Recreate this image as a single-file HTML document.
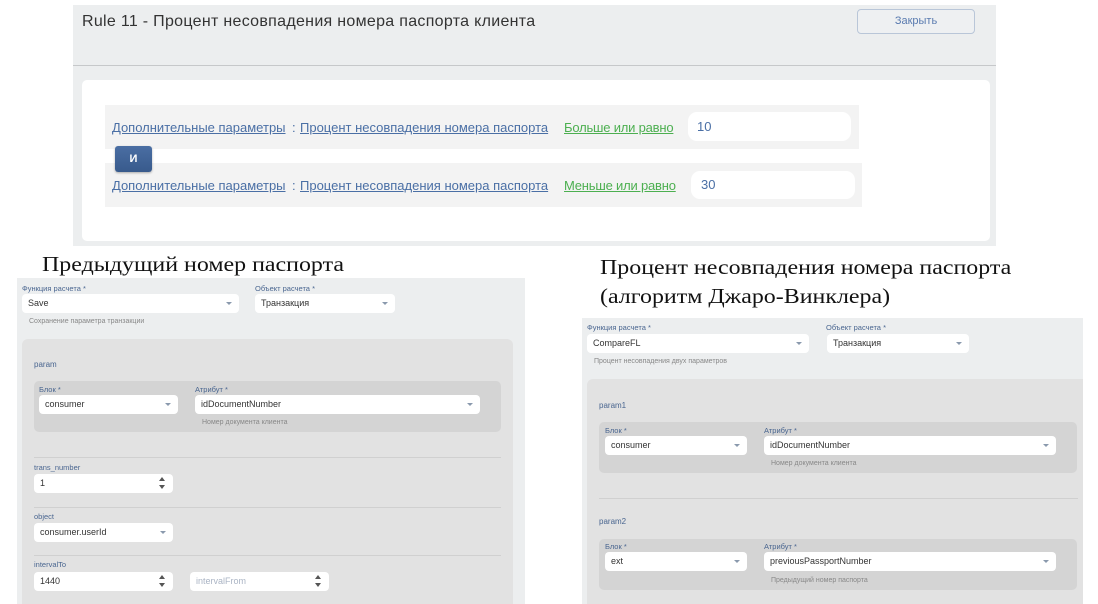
<!DOCTYPE html>
<html><head><meta charset="utf-8">
<style>
*{margin:0;padding:0;box-sizing:border-box}
body{width:1098px;height:604px;background:#fff;position:relative;overflow:hidden;font-family:"Liberation Sans","Noto Sans CJK SC",sans-serif}
.a{position:absolute;white-space:nowrap}
.lk{color:#4a6fa5;text-decoration:underline;font-size:13px}
.gr{color:#4caf50;text-decoration:underline;font-size:13px}
.sel{position:absolute;background:#fff;border-radius:4px;font-size:9px;color:#333;padding-left:6px;line-height:19px;height:19px}
.sel:after{content:"";position:absolute;right:7px;top:8px;border-left:3px solid transparent;border-right:3px solid transparent;border-top:3px solid #8a99ad}
.sp:after{content:"";position:absolute;right:8px;top:3px;width:0;height:0;border-left:3px solid transparent;border-right:3px solid transparent;border-bottom:4px solid #555;border-top:0}
.sp:before{content:"";position:absolute;right:8px;top:11px;width:0;height:0;border-left:3px solid transparent;border-right:3px solid transparent;border-top:4px solid #555}
.lb{position:absolute;font-size:7.5px;color:#4a6690;white-space:nowrap}
.ht{position:absolute;font-size:7px;color:#888;white-space:nowrap}
.cap{position:absolute;font-family:"Liberation Serif",serif;font-size:21px;color:#111;white-space:nowrap;transform-origin:0 0;transform:scaleX(1.14)}
</style></head><body>
<!-- top panel -->
<div class="a" style="left:73px;top:5px;width:923px;height:241px;background:#eceeef"></div>
<div class="a" style="left:73px;top:65px;width:923px;height:1px;background:#c6c8ca"></div>
<div class="a" style="left:82px;top:13px;font-size:16px;color:#333;letter-spacing:0.3px">Rule 11 - Процент несовпадения номера паспорта клиента</div>
<div class="a" style="left:857px;top:9px;width:118px;height:25px;border:1px solid #b9c6d8;border-radius:4px;background:#eef0f2;color:#5a7bb0;font-size:11px;text-align:center;line-height:23px">Закрыть</div>
<div class="a" style="left:82px;top:80px;width:908px;height:161px;background:#fff;border-radius:5px"></div>
<div class="a" style="left:105px;top:105px;width:754px;height:44px;background:#f3f3f3"></div>
<div class="a" style="left:105px;top:163px;width:757px;height:44px;background:#f3f3f3"></div>
<div class="a" style="left:688px;top:112px;width:163px;height:29px;background:#fff;border-radius:9px"></div>
<div class="a" style="left:691px;top:171px;width:164px;height:28px;background:#fff;border-radius:9px"></div>
<div class="a lk" style="left:112px;top:120px">Дополнительные параметры</div>
<div class="a lk" style="left:292px;top:120px;text-decoration:none">:</div>
<div class="a lk" style="left:300px;top:120px">Процент несовпадения номера паспорта</div>
<div class="a gr" style="left:564px;top:120px;letter-spacing:-0.2px">Больше или равно</div>
<div class="a" style="left:697px;top:119px;font-size:13px;color:#4a6fa5">10</div>
<div class="a lk" style="left:112px;top:178px">Дополнительные параметры</div>
<div class="a lk" style="left:292px;top:178px;text-decoration:none">:</div>
<div class="a lk" style="left:300px;top:178px">Процент несовпадения номера паспорта</div>
<div class="a gr" style="left:564px;top:178px;letter-spacing:-0.2px">Меньше или равно</div>
<div class="a" style="left:701px;top:177px;font-size:13px;color:#4a6fa5">30</div>
<div class="a" style="left:115px;top:146px;width:37px;height:26px;background:linear-gradient(#4a6ea3,#385a8c);border-radius:3px;color:#fff;font-size:11px;font-weight:bold;text-align:center;line-height:26px;box-shadow:0 1px 2px rgba(0,0,0,.3)">И</div>

<!-- captions -->
<div class="cap" style="left:42px;top:252px">Предыдущий номер паспорта</div>
<div class="cap" style="left:600px;top:255px">Процент несовпадения номера паспорта</div>
<div class="cap" style="left:600px;top:284px">(алгоритм Джаро-Винклера)</div>

<!-- left screenshot -->
<div class="a" style="left:17px;top:278px;width:508px;height:326px;background:#eceeef"></div>
<div class="lb" style="left:22px;top:284px">Функция расчета *</div>
<div class="lb" style="left:255px;top:284px">Объект расчета *</div>
<div class="sel" style="left:22px;top:294px;width:217px">Save</div>
<div class="sel" style="left:255px;top:294px;width:140px">Транзакция</div>
<div class="ht" style="left:29px;top:318px">Сохранение параметра транзакции</div>
<div class="a" style="left:22px;top:339px;width:491px;height:265px;background:#e2e2e2;border-radius:6px 6px 0 0"></div>
<div class="lb" style="left:34px;top:360px;font-size:8px">param</div>
<div class="a" style="left:34px;top:381px;width:467px;height:51px;background:#d4d4d4;border-radius:5px"></div>
<div class="lb" style="left:39px;top:385px">Блок *</div>
<div class="lb" style="left:195px;top:385px">Атрибут *</div>
<div class="sel" style="left:39px;top:395px;width:139px">consumer</div>
<div class="sel" style="left:195px;top:395px;width:285px">idDocumentNumber</div>
<div class="ht" style="left:202px;top:419px">Номер документа клиента</div>
<div class="a" style="left:34px;top:457px;width:467px;height:1px;background:#d0d0d0"></div>
<div class="lb" style="left:34px;top:463px">trans_number</div>
<div class="sel sp" style="left:34px;top:474px;width:139px">1</div>
<div class="a" style="left:34px;top:507px;width:467px;height:1px;background:#d0d0d0"></div>
<div class="lb" style="left:34px;top:512px">object</div>
<div class="sel" style="left:34px;top:523px;width:139px">consumer.userId</div>
<div class="a" style="left:34px;top:555px;width:467px;height:1px;background:#d0d0d0"></div>
<div class="lb" style="left:34px;top:560px">intervalTo</div>
<div class="sel sp" style="left:34px;top:572px;width:139px">1440</div>
<div class="sel sp" style="left:190px;top:572px;width:139px;color:#aab4c4">intervalFrom</div>

<!-- right screenshot -->
<div class="a" style="left:582px;top:318px;width:501px;height:286px;background:#eceeef"></div>
<div class="lb" style="left:587px;top:323px">Функция расчета *</div>
<div class="lb" style="left:826px;top:323px">Объект расчета *</div>
<div class="sel" style="left:587px;top:334px;width:222px">CompareFL</div>
<div class="sel" style="left:827px;top:334px;width:142px">Транзакция</div>
<div class="ht" style="left:594px;top:358px">Процент несовпадения двух параметров</div>
<div class="a" style="left:587px;top:379px;width:496px;height:225px;background:#e2e2e2;border-radius:6px 0 0 0"></div>
<div class="lb" style="left:599px;top:401px;font-size:8px">param1</div>
<div class="a" style="left:599px;top:422px;width:478px;height:51px;background:#d4d4d4;border-radius:5px"></div>
<div class="lb" style="left:605px;top:426px">Блок *</div>
<div class="lb" style="left:764px;top:426px">Атрибут *</div>
<div class="sel" style="left:605px;top:436px;width:142px">consumer</div>
<div class="sel" style="left:764px;top:436px;width:292px">idDocumentNumber</div>
<div class="ht" style="left:771px;top:460px">Номер документа клиента</div>
<div class="a" style="left:599px;top:498px;width:479px;height:1px;background:#d0d0d0"></div>
<div class="lb" style="left:599px;top:517px;font-size:8px">param2</div>
<div class="a" style="left:599px;top:539px;width:478px;height:51px;background:#d4d4d4;border-radius:5px"></div>
<div class="lb" style="left:605px;top:542px">Блок *</div>
<div class="lb" style="left:764px;top:542px">Атрибут *</div>
<div class="sel" style="left:605px;top:552px;width:142px">ext</div>
<div class="sel" style="left:764px;top:552px;width:292px">previousPassportNumber</div>
<div class="ht" style="left:771px;top:577px">Предыдущий номер паспорта</div>
</body></html>
